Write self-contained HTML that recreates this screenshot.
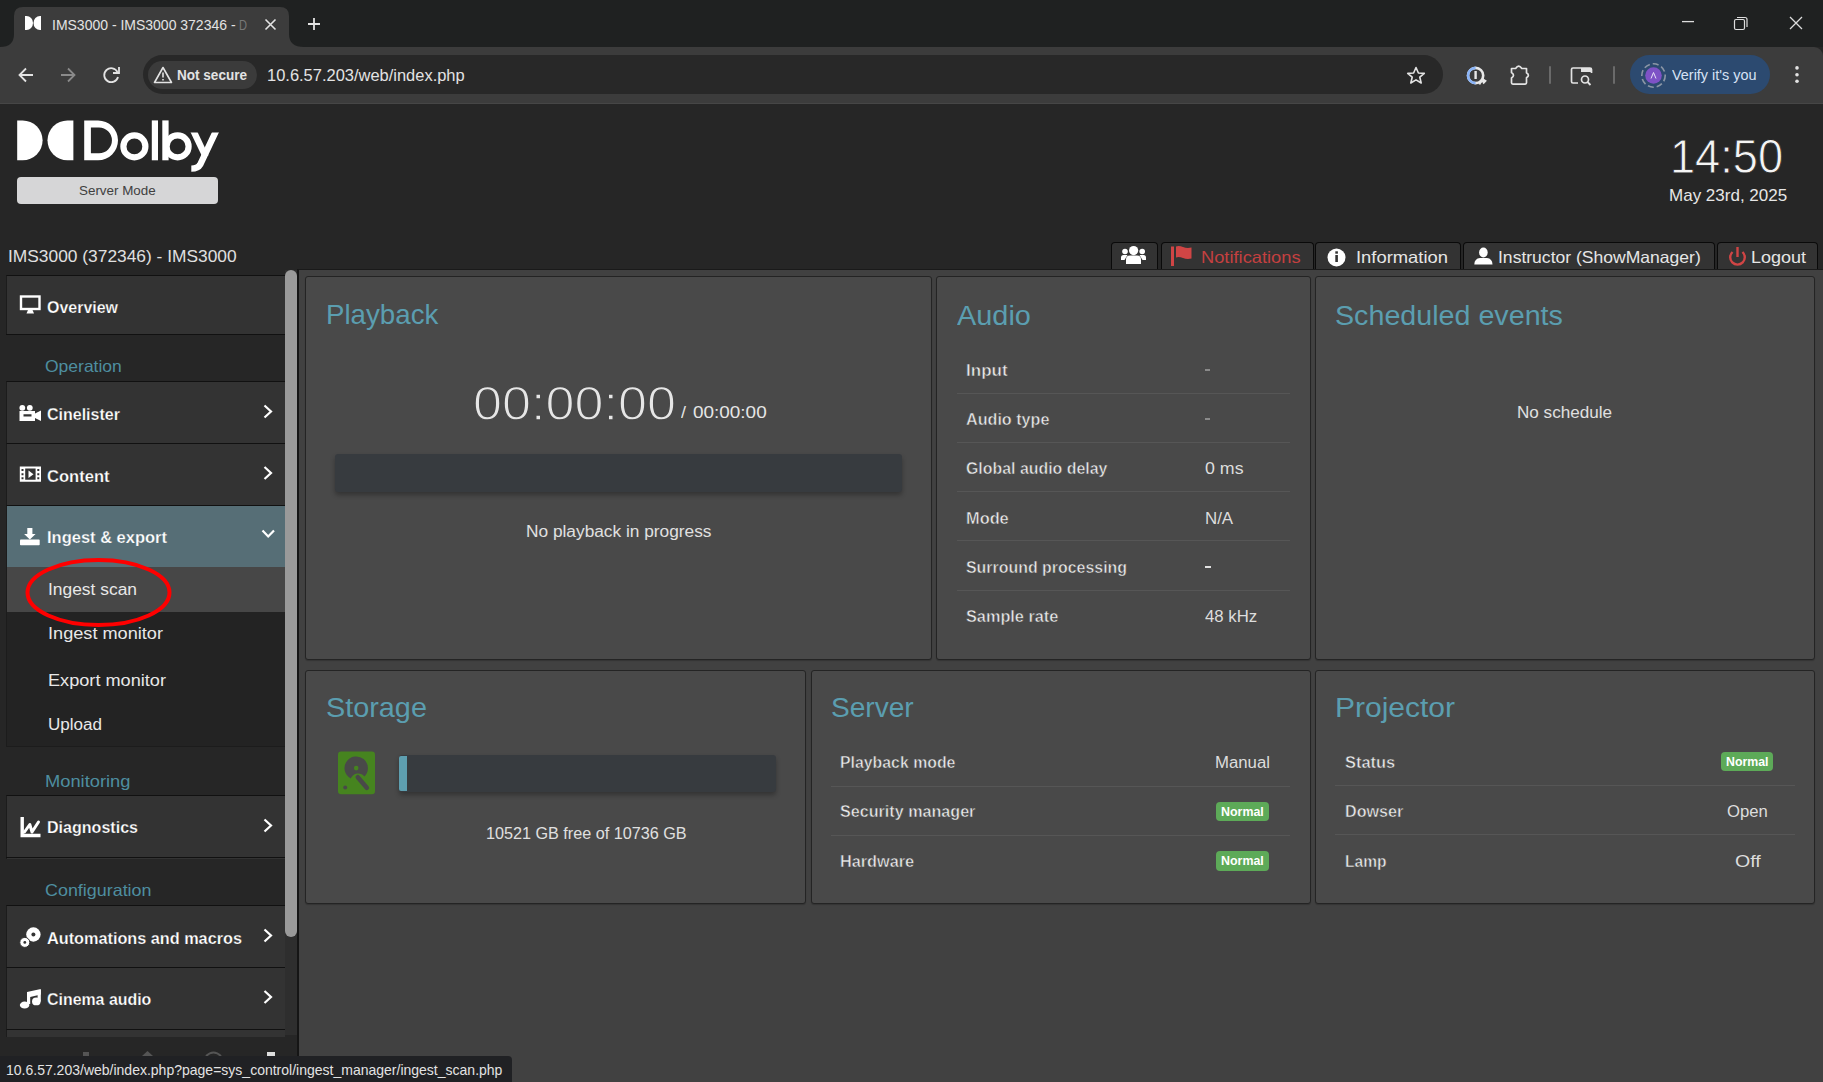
<!DOCTYPE html><html><head><meta charset="utf-8"><style>
*{margin:0;padding:0;box-sizing:border-box}
html,body{width:1823px;height:1082px;overflow:hidden;background:#262626;font-family:"Liberation Sans",sans-serif;position:relative}
.t{position:absolute;white-space:nowrap;line-height:1;transform-origin:0 0}
.ab{position:absolute}
</style></head><body><div style="position:absolute;left:0px;top:0px;width:1823px;height:47px;background:#1f2121"></div>
<svg class="ab" style="left:0;top:0" width="330" height="48"><path d="M0 47 Q14 47 14 34 L14 16 Q14 7 23 7 L280 7 Q289 7 289 16 L289 34 Q289 47 304 47 Z" fill="#3c3c3c"/></svg>
<div style="position:absolute;left:0px;top:47px;width:1823px;height:57px;background:#3c3c3c;border-radius:0 9px 0 0"></div>
<div style="position:absolute;left:0px;top:103px;width:1823px;height:1px;background:#464646"></div>
<svg class="ab" style="left:25px;top:16px" width="17" height="14" viewBox="0 0 17 14"><path d="M0 0 H1.5 A6.5 7 0 0 1 1.5 14 H0 Z" fill="#fff"/><path d="M16 0 H15 A6.5 7 0 0 0 15 14 H16 Z" fill="#fff"/></svg>
<div class="t" style="left:52.20px;top:17.25px;font-size:15.30px;color:#e3e3e3;transform:scaleX(0.9146);">IMS3000 - IMS3000 372346 -</div>
<div class="t" style="left:239.00px;top:17.25px;font-size:15.30px;color:#777;transform:scaleX(0.7240);">D</div>
<svg class="ab" style="left:264px;top:18px" width="13" height="13"><path d="M1.5 1.5 L11.5 11.5 M11.5 1.5 L1.5 11.5" stroke="#e3e3e3" stroke-width="1.6"/></svg>
<svg class="ab" style="left:307px;top:17px" width="14" height="14"><path d="M7 1 V13 M1 7 H13" stroke="#e3e3e3" stroke-width="1.8"/></svg>
<svg class="ab" style="left:1680px;top:15px" width="130" height="18"><path d="M2 6.6 H14" stroke="#ddd" stroke-width="1.3"/><rect x="54.5" y="4.5" width="10" height="10" rx="1.5" fill="none" stroke="#ddd" stroke-width="1.2"/><path d="M57 2.5 H65 Q67 2.5 67 4.5 V12" fill="none" stroke="#ddd" stroke-width="1.2"/><path d="M110 2 L122 14 M122 2 L110 14" stroke="#ddd" stroke-width="1.3"/></svg>
<svg class="ab" style="left:16px;top:64px" width="110" height="22"><path d="M17 11 H4 M10 4.5 L3.5 11 L10 17.5" fill="none" stroke="#e3e3e3" stroke-width="1.8"/><path d="M45 11 H58 M52 4.5 L58.5 11 L52 17.5" fill="none" stroke="#8a8a8a" stroke-width="1.8"/><path d="M101.5 8 A7 7 0 1 0 102 13" fill="none" stroke="#e3e3e3" stroke-width="1.8"/><path d="M103 3 V9 H97" fill="none" stroke="#e3e3e3" stroke-width="1.8"/></svg>
<div style="position:absolute;left:143px;top:55px;width:1300px;height:39px;background:#282828;border-radius:20px"></div>
<div style="position:absolute;left:148px;top:61px;width:109px;height:28px;background:#3b3b3b;border-radius:14px"></div>
<svg class="ab" style="left:153px;top:66px" width="20" height="18"><path d="M10 1.5 L18.5 16.5 H1.5 Z" fill="none" stroke="#e3e3e3" stroke-width="1.6" stroke-linejoin="round"/><path d="M10 6.5 V11.5 M10 13 V14.5" stroke="#e3e3e3" stroke-width="1.6"/></svg>
<div class="t" style="left:177.30px;top:67.73px;font-size:14.50px;color:#e3e3e3;font-weight:700;transform:scaleX(0.9340);">Not secure</div>
<div class="t" style="left:266.80px;top:67.53px;font-size:15.80px;color:#e3e3e3;transform:scaleX(1.0419);">10.6.57.203/web/index.php</div>
<svg class="ab" style="left:1406px;top:66px" width="20" height="20"><path d="M10 1.5 L12.4 7 L18.3 7.4 L13.8 11.2 L15.2 17 L10 13.9 L4.8 17 L6.2 11.2 L1.7 7.4 L7.6 7 Z" fill="none" stroke="#e3e3e3" stroke-width="1.6" stroke-linejoin="round"/></svg>
<svg class="ab" style="left:1460px;top:60px" width="80" height="32"><circle cx="15.6" cy="15.5" r="7.6" fill="none" stroke="#e8e8e8" stroke-width="2.6"/><path d="M15.6 23.1 A7.6 7.6 0 0 1 15.6 7.9" fill="none" stroke="#8ab4f8" stroke-width="2.6"/><rect x="14.4" y="11" width="2.4" height="8" fill="#e8e8e8"/><path d="M19.5 24.5 Q21 20.5 25 21 M22.5 19 L25.5 21 L23 23.5" fill="none" stroke="#e8e8e8" stroke-width="1.8"/><path d="M51.5 8.5 H55.6 Q58.7 3.8 61.8 8.5 H66.5 V12.8 Q70.3 15.3 66.5 17.8 V22.8 Q66.5 24.1 65.2 24.1 H52.8 Q51.5 24.1 51.5 22.8 V18 Q55.5 15.3 51.5 12.5 Z" fill="none" stroke="#e3e3e3" stroke-width="1.7" stroke-linejoin="round"/></svg>
<div style="position:absolute;left:1549px;top:66px;width:2px;height:18px;background:#6a6a6a;border-radius:1px"></div>
<svg class="ab" style="left:1569px;top:65px" width="26" height="24"><path d="M9 18 H4 Q2.5 18 2.5 16.5 V4.5 Q2.5 3 4 3 H21 Q22.5 3 22.5 4.5 V8" fill="none" stroke="#e3e3e3" stroke-width="1.7"/><rect x="12" y="3" width="10.5" height="4" fill="#e3e3e3"/><circle cx="16" cy="14.5" r="3.5" fill="none" stroke="#e3e3e3" stroke-width="1.7"/><path d="M18.5 17 L21.5 20" stroke="#e3e3e3" stroke-width="1.8"/></svg>
<div style="position:absolute;left:1613px;top:66px;width:2px;height:18px;background:#6a6a6a;border-radius:1px"></div>
<div style="position:absolute;left:1630px;top:54.5px;width:140px;height:39.5px;background:#2c4a70;border-radius:20px"></div>
<svg class="ab" style="left:1640px;top:62px" width="27" height="27"><circle cx="13.5" cy="13.5" r="11.7" fill="none" stroke="#8b96a6" stroke-width="1.6" stroke-dasharray="6 3"/><circle cx="13.5" cy="13.5" r="8.3" fill="#7e52c6"/><path d="M11 16.5 L13.5 10.5 L16 16.5" fill="none" stroke="#e8e0f5" stroke-width="1"/></svg>
<div class="t" style="left:1671.50px;top:68.44px;font-size:14.60px;color:#d6e2f5;transform:scaleX(0.9877);">Verify it's you</div>
<svg class="ab" style="left:1791px;top:64px" width="12" height="24"><circle cx="6" cy="3.9" r="1.8" fill="#e3e3e3"/><circle cx="6" cy="10.7" r="1.8" fill="#e3e3e3"/><circle cx="6" cy="17.3" r="1.8" fill="#e3e3e3"/></svg>
<svg class="ab" style="left:0;top:0" width="230" height="180" viewBox="0 0 230 180"><path d="M17.2 120.4 H22.65 A19.95 19.95 0 0 1 22.65 160.3 H17.2 Z" fill="#fff"/><path d="M73.4 120.4 H67.45 A19.95 19.95 0 0 0 67.45 160.3 H73.4 Z" fill="#fff"/><path fill-rule="evenodd" d="M84.2 120.4 H98.05 A19.95 19.95 0 0 1 98.05 160.3 H84.2 Z M90.9 127.4 H99 A12.95 12.95 0 0 1 99 153.3 H90.9 Z" fill="#fff"/><circle cx="134.4" cy="146.4" r="11" fill="none" stroke="#fff" stroke-width="6.2"/><rect x="151.8" y="120.4" width="6.2" height="39.9" fill="#fff"/><rect x="162.3" y="120.4" width="6.3" height="39.9" fill="#fff"/><circle cx="177.6" cy="146.4" r="11" fill="none" stroke="#fff" stroke-width="6.2"/><defs><clipPath id="yc"><rect x="185" y="132.5" width="40" height="45"/></clipPath></defs><g clip-path="url(#yc)"><path d="M192.3 128.5 L205.6 156.5" stroke="#fff" stroke-width="6.4"/><path d="M217.2 128.5 L200.2 164.5 Q198 168.6 191.3 168.6" fill="none" stroke="#fff" stroke-width="6.4"/></g></svg>
<div style="position:absolute;left:17px;top:177px;width:201px;height:27px;background:#d6d6d7;border-radius:4px"></div>
<div class="t" style="left:79.00px;top:184.47px;font-size:13.50px;color:#404040;transform:scaleX(0.9922);">Server Mode</div>
<div class="t" style="left:1669.80px;top:133.47px;font-size:48.00px;color:#f4f4f4;transform:scaleX(0.9409);-webkit-text-stroke:0.8px #262626;">14:50</div>
<div class="t" style="left:1669.20px;top:187.31px;font-size:17.00px;color:#e6e6e6;transform:scaleX(1.0004);">May 23rd, 2025</div>
<div class="t" style="left:7.70px;top:247.73px;font-size:16.50px;color:#e0e0e0;transform:scaleX(1.0520);">IMS3000 (372346) - IMS3000</div>
<div style="position:absolute;left:1111px;top:242px;width:47px;height:28px;background:#333;border:1px solid #0a0a0a;border-bottom:none;border-radius:4px 4px 0 0"></div>
<div style="position:absolute;left:1161px;top:242px;width:153px;height:28px;background:#333;border:1px solid #0a0a0a;border-bottom:none;border-radius:4px 4px 0 0"></div>
<div style="position:absolute;left:1315px;top:242px;width:146px;height:28px;background:#333;border:1px solid #0a0a0a;border-bottom:none;border-radius:4px 4px 0 0"></div>
<div style="position:absolute;left:1463px;top:242px;width:252px;height:28px;background:#333;border:1px solid #0a0a0a;border-bottom:none;border-radius:4px 4px 0 0"></div>
<div style="position:absolute;left:1717px;top:242px;width:101px;height:28px;background:#333;border:1px solid #0a0a0a;border-bottom:none;border-radius:4px 4px 0 0"></div>
<div class="t" style="left:1201.00px;top:249.33px;font-size:16.50px;color:#c44040;transform:scaleX(1.1074);">Notifications</div>
<div class="t" style="left:1356.00px;top:249.33px;font-size:16.50px;color:#e6e6e6;transform:scaleX(1.1145);">Information</div>
<div class="t" style="left:1498.20px;top:249.03px;font-size:16.50px;color:#e6e6e6;transform:scaleX(1.0632);">Instructor (ShowManager)</div>
<div class="t" style="left:1751.00px;top:249.03px;font-size:16.50px;color:#e6e6e6;transform:scaleX(1.0902);">Logout</div>
<div style="position:absolute;left:297px;top:269px;width:1526px;height:813px;background:#414141;border-top:1px solid #1a1a1a;border-left:2px solid #151515"></div>
<div style="position:absolute;left:305px;top:276px;width:627px;height:384px;background:#494949;border:1px solid #242424;border-radius:3px;box-shadow:0 1px 1px rgba(0,0,0,.2)"></div>
<div style="position:absolute;left:936px;top:276px;width:375px;height:384px;background:#494949;border:1px solid #242424;border-radius:3px;box-shadow:0 1px 1px rgba(0,0,0,.2)"></div>
<div style="position:absolute;left:1315px;top:276px;width:500px;height:384px;background:#494949;border:1px solid #242424;border-radius:3px;box-shadow:0 1px 1px rgba(0,0,0,.2)"></div>
<div style="position:absolute;left:305px;top:670px;width:501px;height:234px;background:#494949;border:1px solid #242424;border-radius:3px;box-shadow:0 1px 1px rgba(0,0,0,.2)"></div>
<div style="position:absolute;left:811px;top:670px;width:500px;height:234px;background:#494949;border:1px solid #242424;border-radius:3px;box-shadow:0 1px 1px rgba(0,0,0,.2)"></div>
<div style="position:absolute;left:1315px;top:670px;width:500px;height:234px;background:#494949;border:1px solid #242424;border-radius:3px;box-shadow:0 1px 1px rgba(0,0,0,.2)"></div>
<div class="t" style="left:326.20px;top:301.22px;font-size:27.50px;color:#5b9eb0;transform:scaleX(1.0067);">Playback</div>
<div class="t" style="left:472.60px;top:379.89px;font-size:47.50px;color:#e6e6e6;transform:scaleX(1.0979);-webkit-text-stroke:1.3px #494949;">00:00:00</div>
<div class="t" style="left:681.00px;top:404.41px;font-size:17.00px;color:#e6e6e6;transform:scaleX(1.0526);">/</div>
<div class="t" style="left:692.60px;top:404.41px;font-size:17.00px;color:#e6e6e6;transform:scaleX(1.1133);">00:00:00</div>
<div style="position:absolute;left:335px;top:454px;width:567px;height:38px;background:#373b3f;border-radius:3px;box-shadow:0 3px 5px rgba(0,0,0,.3)"></div>
<div class="t" style="left:525.90px;top:523.96px;font-size:16.00px;color:#e0e0e0;transform:scaleX(1.0807);">No playback in progress</div>
<div class="t" style="left:956.60px;top:301.92px;font-size:27.50px;color:#5b9eb0;transform:scaleX(1.0505);">Audio</div>
<div class="t" style="left:966.00px;top:363.46px;font-size:16.00px;color:#e8e8e8;font-weight:700;transform:scaleX(1.0639);-webkit-text-stroke:0.5px #494949;">Input</div>
<div class="t" style="left:966.00px;top:412.26px;font-size:16.00px;color:#e8e8e8;font-weight:700;transform:scaleX(1.0091);-webkit-text-stroke:0.5px #494949;">Audio type</div>
<div class="t" style="left:966.00px;top:461.36px;font-size:16.00px;color:#e8e8e8;font-weight:700;transform:scaleX(0.9940);-webkit-text-stroke:0.5px #494949;">Global audio delay</div>
<div class="t" style="left:1205.00px;top:461.36px;font-size:16.00px;color:#dddddd;transform:scaleX(1.1111);">0 ms</div>
<div class="t" style="left:966.00px;top:510.56px;font-size:16.00px;color:#e8e8e8;font-weight:700;transform:scaleX(1.0228);-webkit-text-stroke:0.5px #494949;">Mode</div>
<div class="t" style="left:1205.00px;top:510.56px;font-size:16.00px;color:#dddddd;transform:scaleX(1.0544);">N/A</div>
<div class="t" style="left:966.00px;top:560.06px;font-size:16.00px;color:#e8e8e8;font-weight:700;transform:scaleX(0.9951);-webkit-text-stroke:0.5px #494949;">Surround processing</div>
<div class="t" style="left:966.00px;top:609.26px;font-size:16.00px;color:#e8e8e8;font-weight:700;transform:scaleX(1.0176);-webkit-text-stroke:0.5px #494949;">Sample rate</div>
<div class="t" style="left:1205.00px;top:609.26px;font-size:16.00px;color:#dddddd;transform:scaleX(1.0482);">48 kHz</div>
<div style="position:absolute;left:957px;top:393px;width:333px;height:1px;background:#565656"></div>
<div style="position:absolute;left:957px;top:442px;width:333px;height:1px;background:#565656"></div>
<div style="position:absolute;left:957px;top:491px;width:333px;height:1px;background:#565656"></div>
<div style="position:absolute;left:957px;top:540px;width:333px;height:1px;background:#565656"></div>
<div style="position:absolute;left:957px;top:590px;width:333px;height:1px;background:#565656"></div>
<div style="position:absolute;left:1205px;top:369px;width:5px;height:1.5px;background:#8a8a8a"></div>
<div style="position:absolute;left:1205px;top:418px;width:5px;height:1.5px;background:#8a8a8a"></div>
<div style="position:absolute;left:1205px;top:566px;width:6px;height:2px;background:#e0e0e0"></div>
<div class="t" style="left:1335.10px;top:301.92px;font-size:27.50px;color:#5b9eb0;transform:scaleX(1.0423);">Scheduled events</div>
<div class="t" style="left:1517.30px;top:404.76px;font-size:16.00px;color:#e0e0e0;transform:scaleX(1.0680);">No schedule</div>
<div class="t" style="left:326.30px;top:693.92px;font-size:27.50px;color:#5b9eb0;transform:scaleX(1.0478);">Storage</div>
<div style="position:absolute;left:399px;top:755px;width:377px;height:37px;background:#373b3f;border-radius:3px;box-shadow:0 3px 5px rgba(0,0,0,.3)"></div>
<div style="position:absolute;left:399px;top:756px;width:8px;height:35px;background:#5e9fb0;border-radius:2px 0 0 2px"></div>
<div class="t" style="left:486.20px;top:825.76px;font-size:16.00px;color:#e0e0e0;transform:scaleX(1.0113);">10521 GB free of 10736 GB</div>
<div class="t" style="left:830.80px;top:694.22px;font-size:27.50px;color:#5b9eb0;transform:scaleX(1.0210);">Server</div>
<div class="t" style="left:840.00px;top:755.36px;font-size:16.00px;color:#e8e8e8;font-weight:700;transform:scaleX(0.9906);-webkit-text-stroke:0.5px #494949;">Playback mode</div>
<div class="t" style="left:840.00px;top:804.36px;font-size:16.00px;color:#e8e8e8;font-weight:700;transform:scaleX(1.0082);-webkit-text-stroke:0.5px #494949;">Security manager</div>
<div class="t" style="left:840.00px;top:853.76px;font-size:16.00px;color:#e8e8e8;font-weight:700;transform:scaleX(1.0165);-webkit-text-stroke:0.5px #494949;">Hardware</div>
<div class="t" style="left:1215.00px;top:755.36px;font-size:16.00px;color:#dddddd;transform:scaleX(1.0476);">Manual</div>
<div style="position:absolute;left:831px;top:786px;width:459px;height:1px;background:#565656"></div>
<div style="position:absolute;left:831px;top:835px;width:459px;height:1px;background:#565656"></div>
<div style="position:absolute;left:1216.4px;top:801.8px;width:52.799999999999955px;height:19.40000000000009px;background:#5daa58;border-radius:4px"></div>
<div class="t" style="left:1221.40px;top:804.80px;font-size:13.00px;color:#fff;font-weight:700;transform:scaleX(0.9554);">Normal</div>
<div style="position:absolute;left:1216.4px;top:851px;width:52.799999999999955px;height:19.5px;background:#5daa58;border-radius:4px"></div>
<div class="t" style="left:1221.40px;top:854.00px;font-size:13.00px;color:#fff;font-weight:700;transform:scaleX(0.9554);">Normal</div>
<div class="t" style="left:1335.00px;top:694.22px;font-size:27.50px;color:#5b9eb0;transform:scaleX(1.0904);">Projector</div>
<div class="t" style="left:1344.50px;top:755.36px;font-size:16.00px;color:#e8e8e8;font-weight:700;transform:scaleX(1.0266);-webkit-text-stroke:0.5px #494949;">Status</div>
<div class="t" style="left:1344.50px;top:804.36px;font-size:16.00px;color:#e8e8e8;font-weight:700;transform:scaleX(1.0069);-webkit-text-stroke:0.5px #494949;">Dowser</div>
<div class="t" style="left:1344.50px;top:853.76px;font-size:16.00px;color:#e8e8e8;font-weight:700;transform:scaleX(0.9730);-webkit-text-stroke:0.5px #494949;">Lamp</div>
<div style="position:absolute;left:1720.8px;top:752.4px;width:52.5px;height:18.899999999999977px;background:#5daa58;border-radius:4px"></div>
<div class="t" style="left:1725.80px;top:755.40px;font-size:13.00px;color:#fff;font-weight:700;transform:scaleX(0.9487);">Normal</div>
<div class="t" style="left:1726.80px;top:804.36px;font-size:16.00px;color:#dddddd;transform:scaleX(1.0421);">Open</div>
<div class="t" style="left:1734.60px;top:853.76px;font-size:16.00px;color:#dddddd;transform:scaleX(1.2227);">Off</div>
<div style="position:absolute;left:1335px;top:785px;width:460px;height:1px;background:#565656"></div>
<div style="position:absolute;left:1335px;top:834px;width:460px;height:1px;background:#565656"></div>
<div style="position:absolute;left:285px;top:270px;width:12px;height:765px;background:#2e2e2e"></div>
<div style="position:absolute;left:285px;top:270px;width:12px;height:667px;background:#9a9a9a;border-radius:6px"></div>
<div style="position:absolute;left:6px;top:275px;width:279px;height:60px;background:#333333;border-top:1px solid #111;border-left:1px solid #1c1c1c"></div>
<div style="position:absolute;left:6px;top:334px;width:279px;height:1px;background:#111"></div>
<div style="position:absolute;left:6px;top:381px;width:279px;height:63px;background:#333333;border-top:1px solid #111;border-left:1px solid #1c1c1c"></div>
<div style="position:absolute;left:6px;top:443px;width:279px;height:63px;background:#333333;border-top:1px solid #111;border-left:1px solid #1c1c1c"></div>
<div style="position:absolute;left:6px;top:505px;width:279px;height:63px;background:#566e76;border-top:1px solid #111;border-left:1px solid #1c1c1c"></div>
<div style="position:absolute;left:6px;top:567px;width:279px;height:45px;background:#474747;border-left:1px solid #1c1c1c"></div>
<div style="position:absolute;left:6px;top:612px;width:279px;height:135px;background:#232323;border-left:1px solid #1c1c1c;border-bottom:1px solid #1c1c1c"></div>
<div style="position:absolute;left:6px;top:795px;width:279px;height:64px;background:#333333;border-top:1px solid #111;border-left:1px solid #1c1c1c"></div>
<div style="position:absolute;left:6px;top:857px;width:279px;height:1px;background:#111"></div>
<div style="position:absolute;left:6px;top:905px;width:279px;height:63px;background:#333333;border-top:1px solid #111;border-left:1px solid #1c1c1c"></div>
<div style="position:absolute;left:6px;top:967px;width:279px;height:63px;background:#333333;border-top:1px solid #111;border-left:1px solid #1c1c1c"></div>
<div style="position:absolute;left:6px;top:1029px;width:279px;height:8px;background:#333333;border-top:1px solid #111;border-left:1px solid #1c1c1c"></div>
<div class="t" style="left:47.30px;top:299.21px;font-size:17.00px;color:#ffffff;font-weight:700;transform:scaleX(0.9392);-webkit-text-stroke:0.25px #333;">Overview</div>
<div class="t" style="left:44.60px;top:358.43px;font-size:16.50px;color:#4e8ea0;transform:scaleX(1.0600);">Operation</div>
<div class="t" style="left:46.90px;top:405.61px;font-size:17.00px;color:#ffffff;font-weight:700;transform:scaleX(0.9413);-webkit-text-stroke:0.25px #333;">Cinelister</div>
<div class="t" style="left:47.00px;top:467.61px;font-size:17.00px;color:#ffffff;font-weight:700;transform:scaleX(0.9735);-webkit-text-stroke:0.25px #333;">Content</div>
<div class="t" style="left:47.00px;top:528.81px;font-size:17.00px;color:#ffffff;font-weight:700;transform:scaleX(0.9697);-webkit-text-stroke:0.25px #566e76;">Ingest &amp; export</div>
<div class="t" style="left:48.00px;top:582.26px;font-size:16.00px;color:#e8e8e8;transform:scaleX(1.0874);">Ingest scan</div>
<div class="t" style="left:48.00px;top:626.46px;font-size:16.00px;color:#e8e8e8;transform:scaleX(1.1341);">Ingest monitor</div>
<div class="t" style="left:48.00px;top:672.56px;font-size:16.00px;color:#e8e8e8;transform:scaleX(1.1341);">Export monitor</div>
<div class="t" style="left:48.00px;top:716.96px;font-size:16.00px;color:#e8e8e8;transform:scaleX(1.0651);">Upload</div>
<div class="t" style="left:44.50px;top:772.73px;font-size:16.50px;color:#4e8ea0;transform:scaleX(1.1097);">Monitoring</div>
<div class="t" style="left:47.00px;top:819.11px;font-size:17.00px;color:#ffffff;font-weight:700;transform:scaleX(0.9445);-webkit-text-stroke:0.25px #333;">Diagnostics</div>
<div class="t" style="left:44.50px;top:882.13px;font-size:16.50px;color:#4e8ea0;transform:scaleX(1.0851);">Configuration</div>
<div class="t" style="left:47.00px;top:929.51px;font-size:17.00px;color:#ffffff;font-weight:700;transform:scaleX(0.9556);-webkit-text-stroke:0.25px #333;">Automations and macros</div>
<div class="t" style="left:47.10px;top:991.21px;font-size:17.00px;color:#ffffff;font-weight:700;transform:scaleX(0.9358);-webkit-text-stroke:0.25px #333;">Cinema audio</div>
<div style="position:absolute;left:83px;top:1052px;width:6px;height:4px;background:#555"></div>
<svg class="ab" style="left:140px;top:1050px" width="160" height="8"><path d="M2 6 L7.5 1 L13 6 Z" fill="#555"/><path d="M66 6 Q73.5 -1 81 6" fill="none" stroke="#555" stroke-width="2"/><rect x="127" y="2" width="8" height="5" fill="#ddd"/></svg>
<svg class="ab" style="left:20px;top:553px" width="160" height="80"><ellipse cx="78.5" cy="39.5" rx="71" ry="32.5" fill="none" stroke="#ff0000" stroke-width="4"/></svg>
<div style="position:absolute;left:0px;top:1056px;width:512px;height:26px;background:#202124;border-radius:0 4px 0 0"></div>
<div class="t" style="left:6.00px;top:1062.63px;font-size:14.50px;color:#e3e3e3;transform:scaleX(0.9659);">10.6.57.203/web/index.php?page=sys_control/ingest_manager/ingest_scan.php</div>
<svg class="ab" style="left:0;top:0" width="300" height="1082"><rect x="21" y="296.5" width="18.5" height="12.5" fill="none" stroke="#fff" stroke-width="2.4"/><path d="M26.5 313.5 L28 310 H32.5 L34 313.5 Z" fill="#fff"/><circle cx="22.3" cy="407.8" r="2.9" fill="#fff"/><circle cx="29.8" cy="407.8" r="2.9" fill="#fff"/><path fill-rule="evenodd" d="M19.5 411 H35 V413.5 L41 410.5 V421 L35 418 V421 H19.5 Z M23.5 414.2 H31.5 V416.6 H23.5 Z" fill="#fff"/><path fill-rule="evenodd" d="M19.8 466.5 H41 V481.8 H19.8 Z M25.2 468.5 H35.6 V479.8 H25.2 Z M21.5 469 H23.5 V471 H21.5 Z M21.5 473.2 H23.5 V475.2 H21.5 Z M21.5 477.3 H23.5 V479.3 H21.5 Z M37.3 469 H39.3 V471 H37.3 Z M37.3 473.2 H39.3 V475.2 H37.3 Z M37.3 477.3 H39.3 V479.3 H37.3 Z" fill="#fff"/><path d="M28.5 470.5 L33.5 474.2 L28.5 477.9 Z" fill="#fff"/><path d="M27.3 528 H32.4 V534 H35.6 L29.85 539.5 L24.1 534 H27.3 Z" fill="#fff"/><rect x="20" y="539.6" width="19.7" height="5.6" rx="0.8" fill="#fff"/><path d="M22.2 817 V835.5 H40.5" fill="none" stroke="#fff" stroke-width="3.4"/><path d="M24.5 832 L29.8 824.5 L32 832 L38.5 822" fill="none" stroke="#fff" stroke-width="3" stroke-linejoin="round" stroke-linecap="round"/><circle cx="33.4" cy="934.5" r="7.2" fill="#fff"/><circle cx="33.4" cy="934.5" r="2" fill="#333"/><circle cx="24.8" cy="942.4" r="5" fill="#fff" stroke="#333" stroke-width="1"/><circle cx="24.8" cy="942.4" r="1.4" fill="#333"/><path d="M27 992 L40.8 988.9 V994.6 L30.2 997 V1004 H27 Z" fill="#fff"/><rect x="37.6" y="990" width="3.2" height="11.5" fill="#fff"/><ellipse cx="24.6" cy="1005.1" rx="4.8" ry="3.5" fill="#fff"/><ellipse cx="36.3" cy="1001.4" rx="4.3" ry="3.9" fill="#fff"/><path d="M264.5 405.5 L271 411.5 L264.5 417.5" fill="none" stroke="#fff" stroke-width="2.2"/><path d="M264.5 467 L271 473 L264.5 479" fill="none" stroke="#fff" stroke-width="2.2"/><path d="M262.5 530.5 L268.2 536.5 L274 530.5" fill="none" stroke="#fff" stroke-width="2.2"/><path d="M264.5 819.5 L271 825.5 L264.5 831.5" fill="none" stroke="#fff" stroke-width="2.2"/><path d="M264.5 929.5 L271 935.5 L264.5 941.5" fill="none" stroke="#fff" stroke-width="2.2"/><path d="M264.5 991 L271 997 L264.5 1003" fill="none" stroke="#fff" stroke-width="2.2"/></svg>
<svg class="ab" style="left:1100px;top:240px" width="723" height="32"><circle cx="33.6" cy="10.6" r="4.6" fill="#fff"/><path d="M26 24 V19.5 Q26 15.5 30 15.5 H37 Q41 15.5 41 19.5 V24 Z" fill="#fff"/><circle cx="25" cy="11.5" r="2.8" fill="#fff"/><path d="M21 20 V17.5 Q21 15 23.5 15 H27.5 L24.5 20 Z" fill="#fff"/><circle cx="42.2" cy="11.5" r="2.8" fill="#fff"/><path d="M46 20 V17.5 Q46 15 43.5 15 H39.5 L42.5 20 Z" fill="#fff"/><rect x="71" y="6.5" width="3" height="19.5" fill="#d04545"/><path d="M76 6.5 Q79 5.5 83 7 Q87 8.5 91.5 7.5 V18.5 Q87 19.5 83 18 Q79 16.5 76 17.5 Z" fill="#d04545"/><circle cx="236.5" cy="17.5" r="9" fill="#fff"/><rect x="235.3" y="15" width="2.6" height="7" fill="#333"/><rect x="235.3" y="11.3" width="2.6" height="2.4" fill="#333"/><ellipse cx="383.4" cy="12.5" rx="4.3" ry="5" fill="#fff"/><path d="M374.3 24.5 Q374.5 18.5 380 18 H387 Q392.3 18.5 392.5 24.5 Z" fill="#fff"/><path d="M632.5 12 A7.3 7.3 0 1 0 642.5 12" fill="none" stroke="#d04545" stroke-width="2.4"/><rect x="636.3" y="7" width="2.4" height="10" fill="#d04545"/></svg>
<svg class="ab" style="left:330px;top:745px" width="55" height="55"><rect x="8" y="6.6" width="37" height="42.7" rx="3.2" fill="#46841f"/><path d="M20.76 33.46 A11.7 11.7 0 1 1 34.42 31.43 A8 8 0 0 0 20.76 33.46 Z" fill="#494949"/><circle cx="26.2" cy="23.1" r="2.3" fill="#46841f"/><path d="M27.8 32.3 L36.8 42.8" stroke="#494949" stroke-width="4.6" stroke-linecap="round"/><circle cx="15.2" cy="42.5" r="2" fill="#494949"/></svg></body></html>
